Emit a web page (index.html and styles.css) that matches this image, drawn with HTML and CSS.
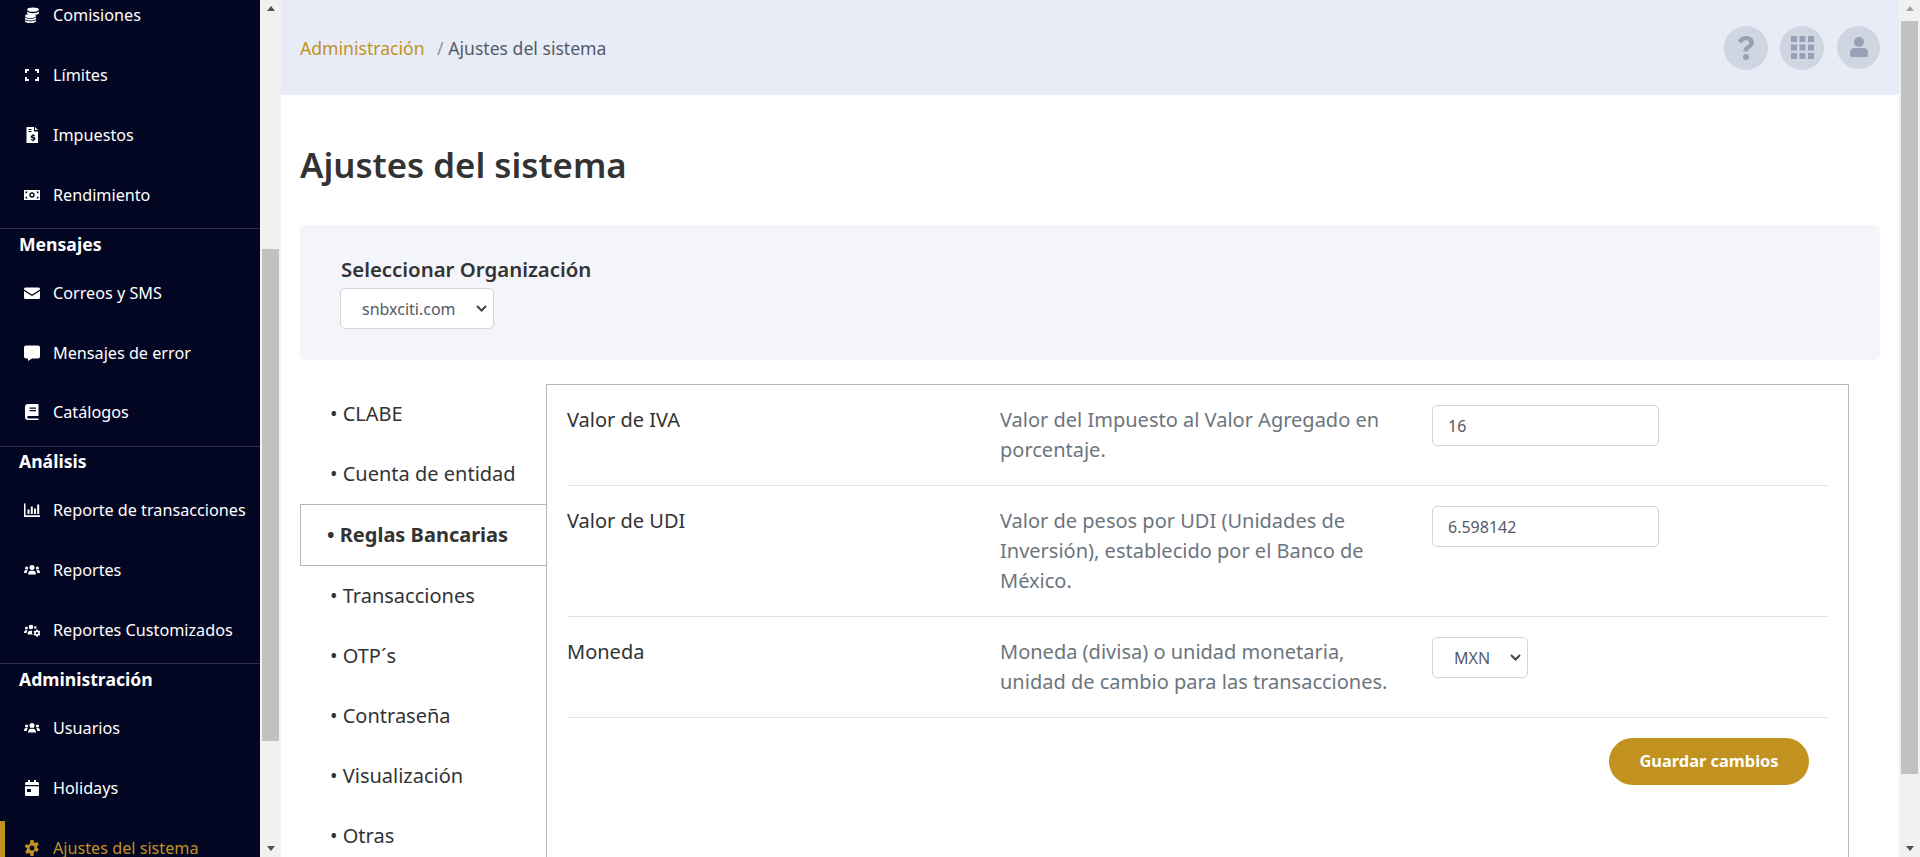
FILE: index.html
```html
<!DOCTYPE html>
<html lang="es">
<head>
  <meta charset="UTF-8">
  <meta name="viewport" content="width=device-width, initial-scale=1.0">
  <title>Ajustes del sistema</title>
  <link rel="stylesheet" href="styles.css">
</head>
<body>

  <aside class="sidebar">
    <nav class="nav">
      <a class="nav-item">
        <svg class="nav-icon" viewBox="0 0 16 16"><ellipse cx="9" cy="2.6" rx="6" ry="2.2"/><path d="M3 4.6c1 1.2 3.6 1.7 6 1.7s5-.5 6-1.7v1.500c0 1-2.700 2-6 2s-6-1-6-2z"/><ellipse cx="6.5" cy="9" rx="5.5" ry="2.1"/><path d="M1 10.3c1 1.100 3.200 1.500 5.500 1.500s4.500-.4 5.500-1.500v1.400c0 1-2.500 1.900-5.500 1.900S1 12.700 1 11.700z"/><path d="M1 13c1 1 3.200 1.400 5.500 1.400S11 14 12 13v1.200c0 1-2.500 1.800-5.500 1.800S1 15.200 1 14.200z"/></svg>
        Comisiones
      </a>
      <a class="nav-item">
        <svg class="nav-icon" viewBox="0 0 16 16"><path d="M1 6V2h4v2H3v2zM11 2h4v4h-2V4h-2zM1 10h2v2h2v2H1zM13 10h2v4h-4v-2h2z"/></svg>
        Límites
      </a>
      <a class="nav-item">
        <svg class="nav-icon" viewBox="0 0 16 16"><path fill-rule="evenodd" d="M2.500 0H10v4.500h4V16H2.500zM4.500 2v1h3V2zm0 2v1h3V4zM8.600 7v1c-1.300.2-1.900 1-1.900 1.800 0 1.900 2.800 1.300 2.800 2.200 0 .6-1.300.5-2.300 0l-.5 1c.5.300 1.200.5 1.900.6v1h1v-1c1.200-.2 1.800-1 1.800-1.800 0-2-2.800-1.400-2.800-2.200 0-.6 1.100-.5 2-.1l.5-1c-.5-.2-1-.4-1.500-.5V7zM11 0l3 3h-3z"/></svg>
        Impuestos
      </a>
      <a class="nav-item nav-item-last">
        <svg class="nav-icon" viewBox="0 0 16 16"><path fill-rule="evenodd" d="M0 3h16v10H0zM8 5.300a2.700 2.700 0 1 0 0 5.400 2.700 2.700 0 0 0 0-5.400zM1.500 4.500v2a2 2 0 0 0 2-2zm11 0a2 2 0 0 0 2 2v-2zm-11 5v2h2a2 2 0 0 0-2-2zm13 0a2 2 0 0 0-2 2h2z"/><circle cx="8" cy="8" r="1.300"/></svg>
        Rendimiento
      </a>
      <h3 class="nav-title">Mensajes</h3>
      <a class="nav-item">
        <svg class="nav-icon" viewBox="0 0 16 16"><path d="M1.500 2.500h13A1.500 1.500 0 0 1 16 4v.4L8 9.500 0 4.400V4a1.500 1.500 0 0 1 1.500-1.500zM0 6l8 5 8-5v6.500a1.500 1.500 0 0 1-1.500 1.500h-13A1.500 1.500 0 0 1 0 12.500z"/></svg>
        Correos y SMS
      </a>
      <a class="nav-item">
        <svg class="nav-icon" viewBox="0 0 16 16"><path d="M2 .5h12a2 2 0 0 1 2 2v9a2 2 0 0 1-2 2H8l-4 2.500v-2.500H2a2 2 0 0 1-2-2v-9a2 2 0 0 1 2-2z"/></svg>
        Mensajes de error
      </a>
      <a class="nav-item nav-item-last">
        <svg class="nav-icon" viewBox="0 0 16 16"><path fill-rule="evenodd" d="M4 0h10.500v12H4a1.500 1.500 0 0 0 0 2.500h10.500V16H4a3 3 0 0 1-3-3V3a3 3 0 0 1 3-3zm1.500 3.500v1.200h6.500V3.500zm0 2.500v1.200h6.500V6z"/></svg>
        Catálogos
      </a>
      <h3 class="nav-title">Análisis</h3>
      <a class="nav-item">
        <svg class="nav-icon" viewBox="0 0 16 16"><path d="M0 1.500h1.500v11.800H16V15H0zM3.500 7.500h2v4.500h-2zM6.800 4.500h2V12h-2zM10 6.500h2V12h-2zM13.200 2.500h2V12h-2z"/></svg>
        Reporte de transacciones
      </a>
      <a class="nav-item">
        <svg class="nav-icon" viewBox="0 0 16 16"><circle cx="8" cy="5.500" r="2.500"/><circle cx="2.600" cy="6" r="1.600"/><circle cx="13.400" cy="6" r="1.600"/><path d="M4 12.500c0-2.300 1.300-3.700 2.500-3.700h3c1.200 0 2.500 1.400 2.500 3.700zM0 11c0-1.700.8-3 1.800-3H4C3.200 8.700 2.800 9.800 2.800 11zM16 11c0-1.700-.8-3-1.800-3H12c.8.700 1.200 1.800 1.200 3z"/></svg>
        Reportes
      </a>
      <a class="nav-item nav-item-last">
        <svg class="nav-icon" viewBox="0 0 16 16"><circle cx="7" cy="5" r="2.300"/><circle cx="2.400" cy="6" r="1.500"/><circle cx="11.300" cy="5.500" r="1.300"/><path d="M3.500 12.500c0-2.400 1.200-3.800 2.300-3.800h2.500c-.6 1.200-.3 2.800.6 3.800zM0 11c0-1.700.8-2.800 1.700-2.800h1.900C3 9 2.600 10 2.500 11z"/><path fill-rule="evenodd" d="M12.300 7.500h1.400l.2 1 .9.500 1-.3.7 1.200-.8.700v1l.8.700-.7 1.200-1-.3-.9.500-.2 1h-1.400l-.2-1-.9-.5-1 .3-.7-1.200.8-.7v-1l-.8-.7.7-1.200 1 .3.900-.5zm.7 2.600a1.100 1.100 0 1 0 0 2.200 1.100 1.100 0 0 0 0-2.200z"/></svg>
        Reportes Customizados
      </a>
      <h3 class="nav-title">Administración</h3>
      <a class="nav-item">
        <svg class="nav-icon" viewBox="0 0 16 16"><circle cx="8" cy="5.500" r="2.500"/><circle cx="2.600" cy="6" r="1.600"/><circle cx="13.400" cy="6" r="1.600"/><path d="M4 12.500c0-2.300 1.300-3.700 2.500-3.700h3c1.200 0 2.500 1.400 2.500 3.700zM0 11c0-1.700.8-3 1.800-3H4C3.200 8.700 2.800 9.800 2.800 11zM16 11c0-1.700-.8-3-1.800-3H12c.8.700 1.200 1.800 1.200 3z"/></svg>
        Usuarios
      </a>
      <a class="nav-item">
        <svg class="nav-icon" viewBox="0 0 16 16"><path fill-rule="evenodd" d="M4 0h2v2h4V0h2v2h1.500A1.500 1.500 0 0 1 15 3.500V5H1V3.500A1.500 1.500 0 0 1 2.500 2H4zM1 6.300h14v8.200a1.500 1.500 0 0 1-1.500 1.500h-11A1.500 1.500 0 0 1 1 14.500zM3 9v3h4V9z"/></svg>
        Holidays
      </a>
      <a class="nav-item active">
        <svg class="nav-icon" viewBox="0 0 16 16"><path fill-rule="evenodd" d="M6.500 0h3l.4 2.200 1.300.7 2.100-.8 1.500 2.600-1.700 1.400v1.800l1.700 1.400-1.500 2.600-2.100-.8-1.300.7L9.500 16h-3l-.4-2.200-1.300-.7-2.100.8-1.500-2.600 1.700-1.400V8.100L.7 6.700l1.500-2.600 2.100.8 1.300-.7zM8 5.500a2.500 2.500 0 1 0 0 5 2.500 2.500 0 0 0 0-5z"/></svg>
        Ajustes del sistema
      </a>
    </nav>
  </aside>

  <div class="scrollbar scrollbar-side">
    <span class="arrow-up"></span>
    <div class="track"><div class="thumb"></div></div>
    <span class="arrow-down"></span>
  </div>

  <main class="main">
    <header class="topbar">
      <div class="breadcrumb">
        <a>Administración</a>
        <span class="crumb-sep">/</span>
        <span>Ajustes del sistema</span>
      </div>
      <div class="top-actions">
        <button class="round-btn">
          <svg class="icon-help" viewBox="0 0 16 24"><path d="M8 0C3.500 0 .8 2.500 0 5.500l4 1.700C4.600 5.500 6 4.300 8 4.300c1.900 0 3.200 1 3.200 2.400 0 1.300-1 2-2.700 3-1.900 1.100-3 2.500-3 4.800v1h4.800v-.7c0-1.100.6-1.700 2.200-2.700 2-1.200 3.500-2.800 3.500-5.500C16 2.700 12.500 0 8 0z"/><circle cx="8" cy="21" r="3"/></svg>
        </button>
        <button class="round-btn">
          <svg class="icon-grid" viewBox="0 0 23 23"><path d="M0 0h6v6H0zM8.500 0h6v6h-6zM17 0h6v6h-6zM0 8.500h6v6H0zM8.500 8.500h6v6h-6zM17 8.500h6v6h-6zM0 17h6v6H0zM8.500 17h6v6h-6zM17 17h6v6h-6z"/></svg>
        </button>
        <button class="round-btn round-btn-user">
          <svg class="icon-user" viewBox="0 0 18 20"><circle cx="9" cy="5" r="5"/><path d="M4.500 11h9C16 11 18 13 18 15.500V18a2 2 0 0 1-2 2H2a2 2 0 0 1-2-2v-2.500C0 13 2 11 4.500 11z"/></svg>
        </button>
      </div>
    </header>

    <section class="content">
      <h1 class="page-title">Ajustes del sistema</h1>

      <div class="org-panel">
        <label class="org-label" for="org">Seleccionar Organización</label>
        <select class="select select-org" id="org">
          <option>snbxciti.com</option>
        </select>
      </div>

      <div class="settings">
        <ul class="tabs">
          <li>• CLABE</li>
          <li>• Cuenta de entidad</li>
          <li class="active">• Reglas Bancarias</li>
          <li>• Transacciones</li>
          <li>• OTP´s</li>
          <li>• Contraseña</li>
          <li>• Visualización</li>
          <li>• Otras</li>
        </ul>

        <div class="tab-body">
          <div class="setting-row">
            <div class="setting-name">Valor de IVA</div>
            <p class="setting-desc">Valor del Impuesto al Valor Agregado en porcentaje.</p>
            <input class="field" type="text" value="16">
          </div>
          <div class="setting-row">
            <div class="setting-name">Valor de UDI</div>
            <p class="setting-desc">Valor de pesos por UDI (Unidades de Inversión), establecido por el Banco de México.</p>
            <input class="field" type="text" value="6.598142">
          </div>
          <div class="setting-row">
            <div class="setting-name">Moneda</div>
            <p class="setting-desc">Moneda (divisa) o unidad monetaria, unidad de cambio para las transacciones.</p>
            <div><select class="select select-currency"><option>MXN</option></select></div>
          </div>
          <div class="form-actions">
            <button class="btn-save">Guardar cambios</button>
          </div>
        </div>
      </div>
    </section>
  </main>

  <div class="scrollbar scrollbar-page">
    <span class="arrow-up"></span>
    <div class="track"><div class="thumb"></div></div>
    <span class="arrow-down"></span>
  </div>

</body>
</html>
```

FILE: styles.css
```css
* {
  box-sizing: border-box;
}

body {
  font-family: "Noto Sans", sans-serif;
  margin: 0;
  height: 857px;
  overflow: hidden;
  display: flex;
  background: white;
  color: #333;
}

/* sidebar */
.sidebar {
  width: 260px;
  flex: none;
  background: #030623;
  overflow: hidden;
}

.nav {
  margin-top: -15px;
}

.nav-item {
  display: flex;
  align-items: center;
  height: 60px;
  padding-left: 24px;
  color: white;
  font-size: 16.2px;
}

.nav-item-last {
  height: 64px;
  padding-bottom: 4px;
  border-bottom: 1px solid #2c2e47;
}

.nav-icon {
  width: 16px;
  height: 16px;
  margin-right: 13px;
  fill: white;
  flex: none;
}

.nav-item.active {
  margin-top: 3px;
  height: 57px;
  padding-bottom: 3px;
  color: #c29220;
  box-shadow: inset 5px 0 0 #c29220;
}

.nav-item.active .nav-icon {
  fill: #c29220;
}

.nav-title {
  margin: 0;
  padding-left: 19px;
  padding-bottom: 4px;
  height: 33.6px;
  display: flex;
  align-items: center;
  color: white;
  font-size: 17.6px;
  font-weight: 700;
}

/* scrollbars */
.scrollbar {
  flex: none;
  width: 21px;
  height: 857px;
  padding: 0 2px;
  display: flex;
  flex-direction: column;
  align-items: center;
  background: #f1f1f1;
}

.track {
  flex: 1;
  width: 100%;
  display: flex;
  flex-direction: column;
}

.thumb {
  background: #c1c1c1;
}

.scrollbar-side .track {
  padding-top: 232px;
}

.scrollbar-side .thumb {
  height: 492px;
}

.scrollbar-page .track {
  padding-top: 4px;
}

.scrollbar-page .thumb {
  height: 753px;
}

.arrow-up,
.arrow-down {
  width: 0;
  height: 0;
  flex: none;
  margin: 6px 0;
  border-left: 4.5px solid transparent;
  border-right: 4.5px solid transparent;
}

.arrow-up {
  border-bottom: 5px solid #505050;
}

.arrow-down {
  border-top: 5px solid #505050;
}

.scrollbar-page .arrow-up {
  border-bottom-color: #a3a3a3;
}

/* main */
.main {
  flex: 1;
  min-width: 0;
}

.topbar {
  height: 95px;
  background: #e8ecf7;
  padding: 0 19px;
  display: flex;
  align-items: center;
  justify-content: space-between;
}

.breadcrumb {
  font-size: 17.6px;
  color: #555b66;
}

.breadcrumb a {
  color: #c29220;
}

.crumb-sep {
  margin-left: 8px;
  color: #8c94a3;
}

.top-actions {
  display: flex;
  gap: 12px;
}

.round-btn {
  width: 44px;
  height: 44px;
  border: none;
  border-radius: 50%;
  background: #d0d5e2;
  padding: 0;
  display: flex;
  align-items: center;
  justify-content: center;
}

.round-btn-user {
  width: 43px;
  height: 43px;
  margin-left: 1px;
}

.round-btn svg {
  fill: #97a1b5;
}

.icon-help {
  height: 24px;
}

.icon-grid {
  height: 23px;
}

.icon-user {
  height: 20px;
}

.content {
  padding: 0 19px;
}

.page-title {
  margin: 0;
  padding-top: 48px;
  height: 130px;
  font-size: 34.8px;
  font-weight: 600;
  line-height: 44px;
}

.org-panel {
  background: #f4f5fb;
  border-radius: 5px;
  height: 135px;
  padding: 29px 40px;
}

.org-label {
  display: block;
  margin: 0 0 4px 1px;
  font-size: 20.4px;
  font-weight: 600;
  line-height: 30px;
}

.select {
  display: block;
  height: 41px;
  appearance: none;
  background: white url("data:image/svg+xml,%3Csvg xmlns='http://www.w3.org/2000/svg' width='11' height='7'%3E%3Cpath d='M1 1l4.500 4.500L10 1' fill='none' stroke='%23444' stroke-width='2'/%3E%3C/svg%3E") no-repeat right 6px center;
  border: 1px solid #ced4da;
  border-radius: 5px;
  color: #555b66;
  font-family: inherit;
  font-size: 16px;
}

.select-org {
  width: 154px;
  padding-left: 21px;
}

.select-currency {
  width: 96px;
  padding-left: 21px;
}

/* tabs */
.settings {
  display: flex;
  align-items: flex-start;
  padding-top: 24px;
}

.tabs {
  list-style: none;
  margin: 0;
  padding: 0;
  width: 246px;
  flex: none;
  font-size: 20px;
}

.tabs li {
  height: 60px;
  padding: 0 0 2px 30px;
  display: flex;
  align-items: center;
  white-space: pre;
}

.tabs li.active {
  height: 62px;
  padding-left: 26px;
  font-weight: 700;
  background: white;
  border: 1px solid #b5b5b5;
  border-right: none;
}

.tab-body {
  width: 1303px;
  height: 520px;
  border: 1px solid #b5b5b5;
  padding: 0 20px;
}

.setting-row {
  display: grid;
  grid-template-columns: 433px 432px 1fr;
  padding: 20px 0;
  border-bottom: 1px solid #e2e4e8;
}

.setting-name {
  font-size: 20px;
  line-height: 30px;
}

.setting-desc {
  margin: 0;
  padding-right: 30px;
  font-size: 20px;
  line-height: 30px;
  color: #6c757d;
}

.field {
  width: 227px;
  height: 41px;
  border: 1px solid #ced4da;
  border-radius: 5px;
  padding: 0 15px;
  color: #555b66;
  font-family: inherit;
  font-size: 16px;
}

.form-actions {
  display: flex;
  justify-content: flex-end;
  padding: 20px 19px 0 0;
}

.btn-save {
  width: 200px;
  height: 47px;
  border: none;
  border-radius: 25px;
  background: #c29220;
  padding: 0 0 2px;
  color: white;
  font-family: inherit;
  font-size: 16.4px;
  font-weight: 700;
}
```
